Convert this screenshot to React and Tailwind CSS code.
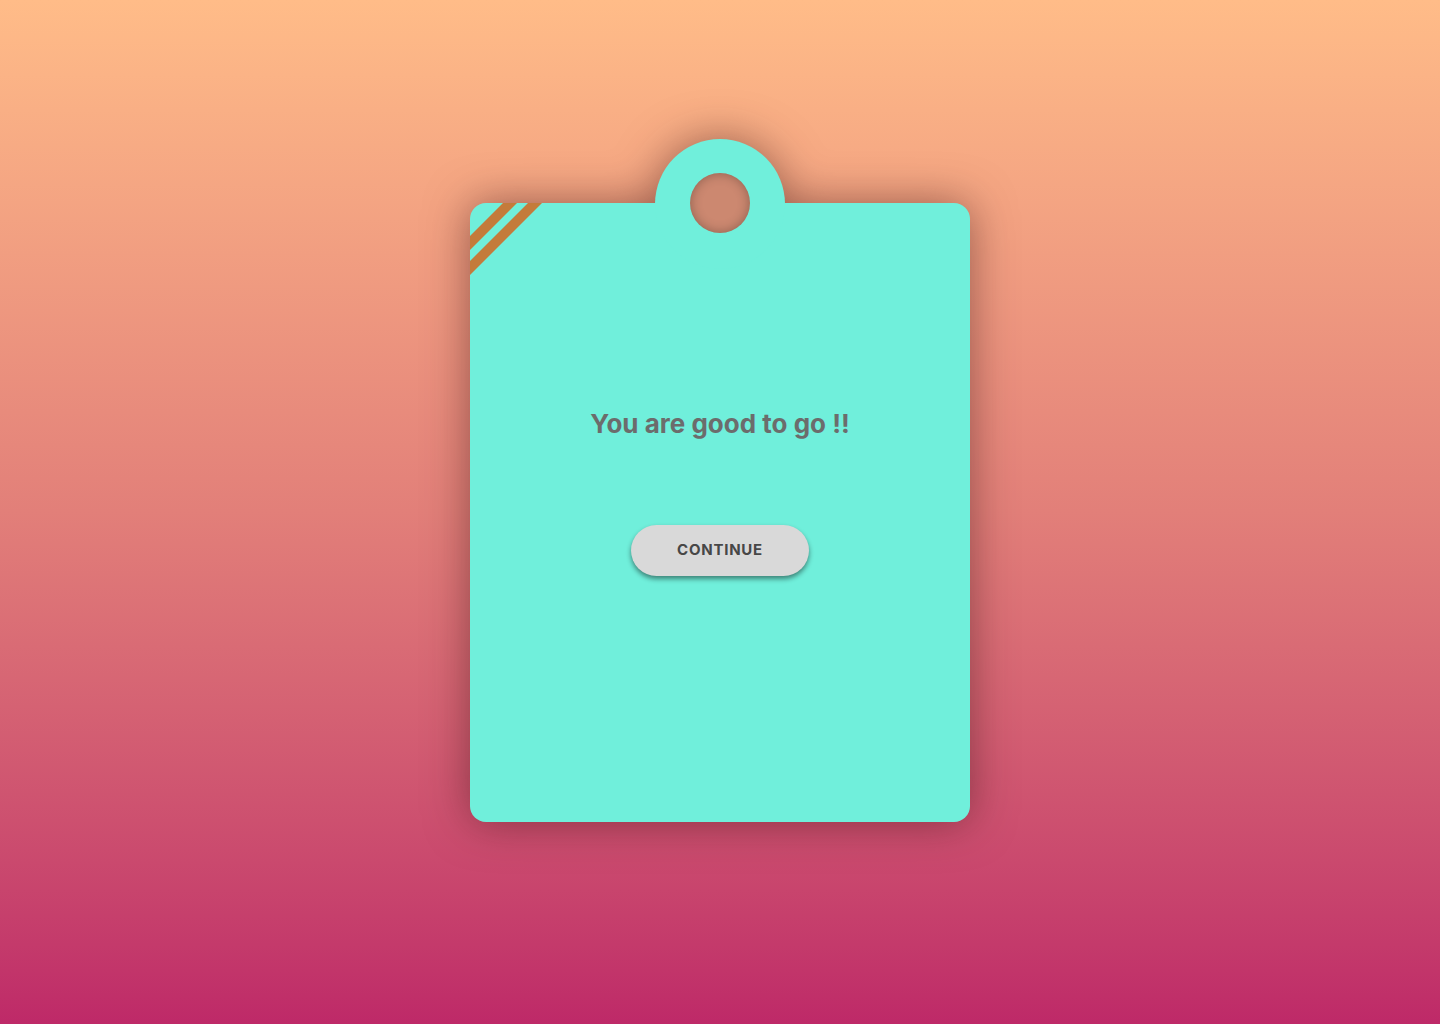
import React from 'react'

const Stripes = () => (
  <svg className="absolute left-0 top-0" width="80" height="80" viewBox="0 0 80 80">
    <polygon points="33,0 47,0 0,47 0,33" fill="#c47b3b" />
    <polygon points="58,0 72,0 0,72 0,58" fill="#c47b3b" />
  </svg>
)

export default function App() {
  return (
    <div
      className="min-h-screen w-full flex items-center justify-center bg-gradient-to-b from-[#ffbc88] via-[#e27f79] to-[#be2968]"
      style={{ fontFamily: 'Inter, "Noto Sans", sans-serif' }}
    >
      <div className="relative drop-shadow-[0_0_22px_rgba(60,20,20,0.5)]">
        <div className="relative w-[500px] h-[619px] rounded-2xl bg-[#70efdb] overflow-hidden flex flex-col items-center pt-[205px]">
          <Stripes />
          <h1 className="text-[26px] leading-8 font-bold text-[#6c6c6c]">You are good to go !!</h1>
          <button className="mt-[85px] w-[178px] h-[51px] rounded-full bg-[#d9d9d9] text-[15px] font-bold tracking-[0.05em] text-[#474747] shadow-[0_3px_5px_rgba(0,0,0,0.45)]">
            CONTINUE
          </button>
        </div>

        {/* hanger tab */}
        <div className="absolute left-1/2 -top-[64px] -translate-x-1/2 w-[130px] h-[130px] rounded-full bg-[#70efdb] flex items-center justify-center">
          <div className="w-[60px] h-[60px] rounded-full bg-[#cc8870] shadow-[inset_0_0_12px_rgba(0,0,0,0.3)] -translate-y-[1px]" />
        </div>
      </div>
    </div>
  )
}
